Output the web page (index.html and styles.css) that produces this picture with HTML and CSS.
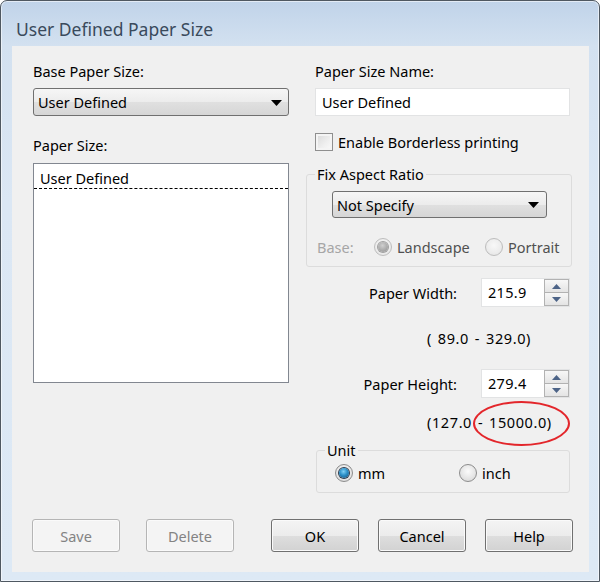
FILE: index.html
```html
<!DOCTYPE html>
<html>
<head>
<meta charset="utf-8">
<link rel="stylesheet" href="styles.css">
</head>
<body>
<div class="window">
  <div class="titlebar">User Defined Paper Size</div>
  <div class="client">
    <div class="cols">
      <div class="col left">
        <div class="label">Base Paper Size:</div>
        <div class="combo combo-base"><span>User Defined</span><svg class="arrow" width="11" height="6" viewBox="0 0 11 6"><path d="M0 0H11L5.5 6Z" fill="#000"/></svg></div>
        <div class="label label-size">Paper Size:</div>
        <div class="listbox">
          <div class="list-item">User Defined</div>
        </div>
      </div>
      <div class="col right">
        <div class="label">Paper Size Name:</div>
        <div class="textbox">User Defined</div>
        <div class="check-row"><span class="checkbox"></span><span>Enable Borderless printing</span></div>
        <fieldset class="group group-aspect">
          <legend>Fix Aspect Ratio</legend>
          <div class="combo combo-aspect"><span>Not Specify</span><svg class="arrow" width="11" height="6" viewBox="0 0 11 6"><path d="M0 0H11L5.5 6Z" fill="#000"/></svg></div>
          <div class="radio-row base-row">
            <span class="base-label">Base:</span>
            <span class="radio-item item-landscape"><span class="radio disabled checked"></span><span>Landscape</span></span>
            <span class="radio-item"><span class="radio disabled"></span><span>Portrait</span></span>
          </div>
        </fieldset>
        <div class="dim-row dim-width">
          <span class="dim-label">Paper Width:</span>
          <div class="spin">
            <span class="spin-value">215.9</span>
            <span class="spin-btns">
              <span class="spin-btn"><svg width="9" height="5" viewBox="0 0 9 5"><path d="M0 5L4.5 0L9 5Z" fill="#4c6387"/></svg></span>
              <span class="spin-btn"><svg width="9" height="5" viewBox="0 0 9 5"><path d="M0 0H9L4.5 5Z" fill="#4c6387"/></svg></span>
            </span>
          </div>
        </div>
        <div class="range range-width">( 89.0 - 329.0)</div>
        <div class="dim-row dim-height">
          <span class="dim-label">Paper Height:</span>
          <div class="spin">
            <span class="spin-value">279.4</span>
            <span class="spin-btns">
              <span class="spin-btn"><svg width="9" height="5" viewBox="0 0 9 5"><path d="M0 5L4.5 0L9 5Z" fill="#4c6387"/></svg></span>
              <span class="spin-btn"><svg width="9" height="5" viewBox="0 0 9 5"><path d="M0 0H9L4.5 5Z" fill="#4c6387"/></svg></span>
            </span>
          </div>
        </div>
        <div class="range range-height"><span class="range-text">(127.0 - 15000.0)<span class="mark"></span></span></div>
        <fieldset class="group group-unit">
          <legend>Unit</legend>
          <div class="radio-row unit-row">
            <span class="radio-item item-mm"><span class="radio checked"></span><span>mm</span></span>
            <span class="radio-item"><span class="radio"></span><span>inch</span></span>
          </div>
        </fieldset>
      </div>
    </div>
    <div class="buttons">
      <div class="btn-group btn-group-left">
        <span class="btn disabled">Save</span>
        <span class="btn disabled">Delete</span>
      </div>
      <div class="btn-group">
        <span class="btn">OK</span>
        <span class="btn">Cancel</span>
        <span class="btn">Help</span>
      </div>
    </div>
  </div>
</div>
</body>
</html>
```

FILE: styles.css
```css
html, body {
  margin: 0;
  padding: 0;
  background: #ffffff;
}
body {
  font-family: "Noto Sans", "Open Sans", sans-serif;
  font-size: 14.5px;
  color: #000;
}
.window {
  box-sizing: border-box;
  width: 600px;
  height: 582px;
  border: 1px solid #4f5861;
  border-radius: 7px 7px 0 0;
  background: linear-gradient(to bottom, #c0d3e9 0, #d3e1f0 45px, #dbe7f4 200px, #dde9f5 100%);
  box-shadow: inset 0 0 0 1px rgba(255,255,255,0.55);
  padding: 0 10px 9px 11px;
  display: flex;
  flex-direction: column;
}
.titlebar {
  height: 45px;
  flex: none;
  display: flex;
  align-items: center;
  padding-left: 4px;
  padding-top: 10px;
  box-sizing: border-box;
  font-size: 17.5px;
  color: #3a4a5c;
}
.client {
  flex: 1;
  background: #f0f0f0;
  padding: 15px 19px 0 21px;
  box-sizing: border-box;
}
.cols {
  display: grid;
  grid-template-columns: 256px 255px;
  column-gap: 26px;
  align-items: start;
}
.label {
  line-height: 20px;
  height: 20px;
}
.label-size {
  margin-top: 19px;
}
.combo {
  box-sizing: border-box;
  border: 1px solid #707070;
  border-radius: 3px;
  background: linear-gradient(to bottom, #f6f6f6 0, #ececec 50%, #e0e0e0 51%, #d6d6d6 100%);
  display: flex;
  align-items: center;
  justify-content: space-between;
}
.combo-base {
  margin-top: 7px;
  height: 28px;
  padding: 0 6px 0 4px;
}
.combo .arrow {
  display: block;
  margin-top: 1px;
}
.listbox {
  margin-top: 8px;
  height: 220px;
  box-sizing: border-box;
  border: 1px solid #828790;
  background: #fff;
}
.list-item {
  height: 25px;
  box-sizing: border-box;
  padding-top: 3px;
  line-height: 22px;
  padding-left: 6px;
  border-bottom: 1px dashed #000;
}
.textbox {
  margin-top: 7px;
  height: 28px;
  box-sizing: border-box;
  border: 1px solid #e2e3e4;
  background: #fff;
  padding-left: 6px;
  line-height: 26px;
}
.check-row {
  margin-top: 17px;
  height: 18px;
  display: flex;
  align-items: center;
  gap: 5px;
  line-height: 18px;
}
.checkbox {
  width: 18px;
  height: 18px;
  box-sizing: border-box;
  border: 1px solid #8f8f8f;
  background: linear-gradient(135deg, #d8d8d8 0, #efefef 60%, #fafafa 100%);
  box-shadow: inset 0 0 0 2px #f4f4f4;
  flex: none;
}
.group {
  margin: 0;
  padding: 0;
  border: 1px solid #dcdcdc;
  border-radius: 3px;
  min-width: 0;
}
.group legend {
  padding: 0 2px;
  margin-left: 8px;
  line-height: 20px;
}
.group-aspect {
  margin: 13px -2px 0 -9px;
  padding-bottom: 9px;
}
.combo-aspect {
  margin: 7px 0 0 25px;
  width: 215px;
  height: 27px;
  padding: 0 7px 0 4px;
}
.radio-row {
  display: flex;
  align-items: center;
  height: 20px;
}
.base-row {
  margin-top: 19px;
  padding-left: 10px;
}
.base-label {
  width: 57px;
  color: #a6a6a6;
}
.radio-item {
  display: flex;
  align-items: center;
  gap: 5px;
}
.item-landscape {
  width: 111px;
}
.base-row .radio-item {
  color: #505050;
}
.radio {
  width: 18px;
  height: 18px;
  box-sizing: border-box;
  border-radius: 50%;
  border: 1px solid #8c8c8c;
  background: radial-gradient(circle at 50% 40%, #fbfbfb 0, #e6e6e6 55%, #d4d4d4 100%);
  flex: none;
  position: relative;
}
.radio.disabled {
  border-color: #bdbdbd;
  background: radial-gradient(circle at 50% 40%, #f8f8f8 0, #ececec 60%, #e0e0e0 100%);
}
.radio.checked::after {
  content: "";
  position: absolute;
  left: 3px;
  top: 3px;
  width: 10px;
  height: 10px;
  border-radius: 50%;
  background: radial-gradient(circle at 45% 35%, #7fd0f5 0, #2a8fc7 45%, #174d78 100%);
  box-shadow: 0 0 0 1px #2c3c4e;
}
.radio.disabled.checked::after {
  background: radial-gradient(circle at 45% 35%, #d0d0d0 0, #a8a8a8 60%, #8e8e8e 100%);
  box-shadow: 0 0 0 1px #a0a0a0;
}
.dim-row {
  display: flex;
  align-items: center;
  height: 29px;
}
.dim-width {
  margin-top: 11px;
}
.dim-height {
  margin-top: 21px;
}
.dim-label {
  width: 142px;
  text-align: right;
  margin-right: 24px;
}
.spin {
  width: 89px;
  height: 29px;
  display: flex;
  box-sizing: border-box;
  border: 1px solid #e2e3e4;
  background: #fff;
}
.spin-value {
  flex: 1;
  padding-left: 6px;
  line-height: 27px;
  letter-spacing: 0.3px;
}
.spin-btns {
  width: 25px;
  display: flex;
  flex-direction: column;
}
.spin-btn {
  flex: 1;
  box-sizing: border-box;
  border: 1px solid #b2b2b2;
  background: linear-gradient(to bottom, #f7f7f7, #e4e4e4);
  display: flex;
  align-items: center;
  justify-content: center;
}
.spin-btn + .spin-btn {
  border-top: none;
}
.spin-btn svg {
  display: block;
}
.range {
  line-height: 20px;
  height: 20px;
  padding-left: 112px;
  letter-spacing: 0.6px;
  word-spacing: 1.5px;
  white-space: nowrap;
}
.range-width {
  margin-top: 21px;
}
.range-height {
  margin-top: 14px;
}
.range-text {
  position: relative;
}
.mark {
  position: absolute;
  left: 46px;
  top: -11px;
  width: 97px;
  height: 45px;
  box-sizing: border-box;
  border: 2px solid #e3262b;
  border-radius: 50%;
}
.group-unit {
  margin: 8px 0 0 1px;
  padding: 0 0 10px 18px;
}
.group-unit legend {
  margin-left: -10px;
}
.unit-row {
  margin-top: 4px;
  height: 18px;
}
.item-mm {
  width: 124px;
}
.buttons {
  margin-top: 26px;
  margin-left: -1px;
  display: flex;
  gap: 37px;
}
.btn-group {
  display: flex;
  gap: 19px;
}
.btn-group-left {
  gap: 26px;
}
.btn {
  width: 88px;
  height: 33px;
  box-sizing: border-box;
  border: 1px solid #707070;
  border-radius: 3px;
  background: linear-gradient(to bottom, #f4f4f4 0, #ececec 50%, #dedede 51%, #d2d2d2 100%);
  box-shadow: inset 0 0 0 1px #fafafa;
  display: flex;
  align-items: center;
  justify-content: center;
}
.btn.disabled {
  border-color: #b5b5b5;
  background: #f4f4f4;
  color: #838383;
}
```
